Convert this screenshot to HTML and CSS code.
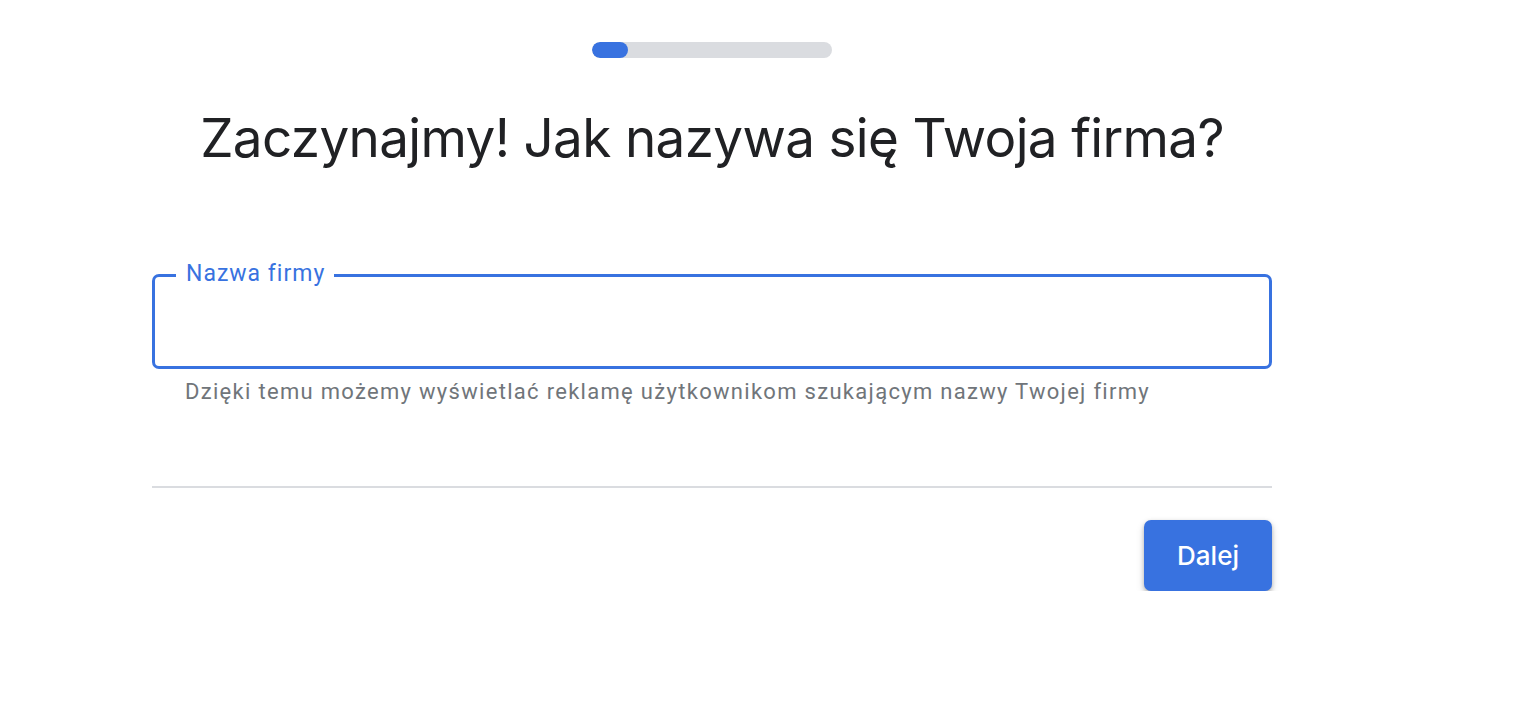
FILE: index.html
```html
<!DOCTYPE html>
<html lang="pl">
<head>
<meta charset="utf-8">
<title>Nazwa firmy</title>
<link rel="stylesheet" href="styles.css">
</head>
<body>
<main class="page">
  <div class="progress"><div class="progress-fill"></div></div>
  <h1 class="title">Zaczynajmy! Jak nazywa się Twoja firma?</h1>
  <div class="field">
    <span class="field-label">Nazwa firmy</span>
    <input class="field-input" type="text" aria-label="Nazwa firmy">
  </div>
  <p class="helper">Dzięki temu możemy wyświetlać reklamę użytkownikom szukającym nazwy Twojej firmy</p>
  <hr class="divider">
  <div class="actions">
    <button class="btn-next" type="button">Dalej</button>
  </div>
</main>
</body>
</html>
```
FILE: styles.css
```css
html, body {
  margin: 0;
  padding: 0;
  background: #ffffff;
}
body {
  font-family: Roboto, "Liberation Sans", Arial, sans-serif;
}
.page {
  width: 1120px;
  margin-left: 152px;
  padding-top: 42px;
  display: flex;
  flex-direction: column;
}
.progress {
  align-self: center;
  width: 240px;
  height: 16px;
  border-radius: 8px;
  background: #dadce0;
  overflow: hidden;
}
.progress-fill {
  width: 36px;
  height: 100%;
  border-radius: 8px;
  background: #3872e0;
}
.title {
  margin: 48px 0 0 0;
  text-align: center;
  font-family: Inter, "Open Sans", sans-serif;
  font-weight: 400;
  font-size: 53px;
  line-height: 64px;
  color: #202124;
  letter-spacing: -0.65px;
}
.field {
  position: relative;
  margin-top: 104px;
  height: 95px;
  box-sizing: border-box;
  border: 3px solid #3872e0;
  border-radius: 7px;
}
.field-label {
  position: absolute;
  left: 21px;
  top: -17px;
  padding: 0 9px 0 10px;
  background: #ffffff;
  color: #3872e0;
  font-size: 23px;
  line-height: 28px;
  letter-spacing: 1px;
}
.field-input {
  width: 100%;
  height: 100%;
  box-sizing: border-box;
  border: 0;
  outline: none;
  background: transparent;
  padding: 0 30px;
  font-size: 20px;
  font-family: inherit;
}
.helper {
  margin: 10px 0 0 33px;
  font-size: 22px;
  line-height: 26px;
  color: #70757a;
  letter-spacing: 1.3px;
}
.divider {
  margin: 81px 0 0 0;
  border: 0;
  height: 2px;
  background: #dadce0;
}
.actions {
  display: flex;
  justify-content: flex-end;
  margin-top: 32px;
}
.btn-next {
  width: 128px;
  height: 71px;
  border: 0;
  border-radius: 7px;
  background: #3872e0;
  color: #ffffff;
  font-family: Inter, "Open Sans", sans-serif;
  font-size: 26px;
  font-weight: 500;
  box-shadow: 0 2px 4px rgba(0,0,0,0.25), 0 4px 10px rgba(0,0,0,0.12);
  cursor: pointer;
}
```
